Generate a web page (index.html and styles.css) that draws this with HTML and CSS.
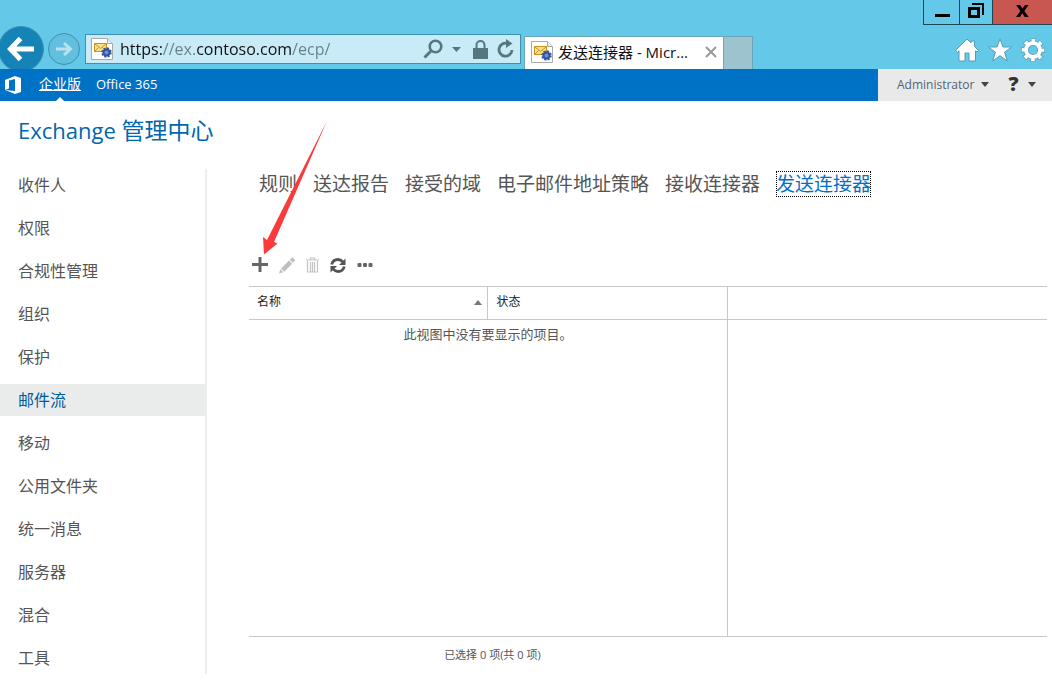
FILE: index.html
```html
<!DOCTYPE html>
<html lang="zh-CN">
<head>
<meta charset="utf-8">
<title>发送连接器 - Microsoft Exchange</title>
<link rel="stylesheet" href="styles.css">
</head>
<body>
<svg class="symbols" aria-hidden="true">
  <symbol id="page-icon" viewBox="0 0 22 22">
    <path d="M.5.5h16l5 5v16H.5z" fill="#fff" stroke="#a9a9a9"/>
    <path d="M16.500.5v5h5" fill="#eee" stroke="#a9a9a9"/>
    <path d="M3.500 5.500h12v8h-12z" fill="#fbe08a" stroke="#c9921d"/>
    <path d="M3.500 5.500l6 5 6-5M3.500 13.500l4-4M15.500 13.500l-4-4" fill="none" stroke="#c9921d"/>
    <circle cx="15.500" cy="14.500" r="3" fill="#6f8fd8" stroke="#34549c" stroke-width="2"/>
    <circle cx="15.500" cy="14.500" r="4.300" fill="none" stroke="#34549c" stroke-width="1.800" stroke-dasharray="2 1.380"/>
  </symbol>
</svg>

<header class="browser">
  <div class="window-row">
    <button class="win" aria-label="最小化"><svg width="16" height="16" viewBox="0 0 16 16"><path d="M1 11h15v3H1z"/></svg></button>
    <button class="win" aria-label="还原"><svg width="16" height="16" viewBox="0 0 16 16"><path d="M1.500 5.500h9v8h-9z" fill="none" stroke="#000" stroke-width="3"/><path d="M4 1h11v11" fill="none" stroke="#000" stroke-width="2"/></svg></button>
    <button class="win win-close" aria-label="关闭"><svg width="16" height="16" viewBox="0 0 16 16"><path d="M1 2h4l2.500 3.500L10 2h3.500L9.300 8l4.400 6h-4l-2.400-3.700L5 14H1l4.400-6z"/></svg></button>
  </div>
  <div class="nav-row">
    <button class="back" aria-label="后退"><svg width="28" height="26" viewBox="0 0 28 26"><path d="M3 13h24M13.500 2.500L3.500 13l10 10.500" fill="none" stroke="#fff" stroke-width="5"/></svg></button>
    <button class="forward" aria-label="前进"><svg width="18" height="16" viewBox="0 0 18 16"><path d="M1 8h14M9 2l6.500 6L9 14" fill="none" stroke="#b9e2ef" stroke-width="3"/></svg></button>
    <div class="address">
      <svg width="22" height="22"><use href="#page-icon"/></svg>
      <input class="url" type="text" aria-label="地址" value="https://ex.contoso.com/ecp/">
      <button class="plain" aria-label="搜索"><svg width="20" height="20" viewBox="0 0 20 20"><circle cx="12.500" cy="7.500" r="5.800" fill="none" stroke="#56777f" stroke-width="2.600"/><path d="M8.500 11.500L1.500 18.500" stroke="#56777f" stroke-width="3"/></svg></button>
      <button class="plain drop" aria-label="搜索选项"><svg width="9" height="5" viewBox="0 0 9 5"><path d="M0 0h9L4.500 5z" fill="#56777f"/></svg></button>
      <button class="plain lock" aria-label="安全"><svg width="15" height="19" viewBox="0 0 15 19"><path d="M0 8h15v11H0z" fill="#56777f"/><path d="M3.500 9V5a4 4 0 018 0v4" fill="none" stroke="#56777f" stroke-width="2"/></svg></button>
      <button class="plain" aria-label="刷新"><svg width="18" height="20" viewBox="0 0 18 20"><path d="M10.500 4.500A6.500 6.500 0 1015 11" fill="none" stroke="#56777f" stroke-width="2.800"/><path d="M9 0l6.500 4.500L9 9z" fill="#56777f"/></svg></button>
    </div>
    <div class="page-tab">
      <svg width="22" height="22"><use href="#page-icon"/></svg>
      <span class="page-title">发送连接器 - Micr...</span>
      <button class="plain" aria-label="关闭标签页"><svg width="12" height="12" viewBox="0 0 12 12"><path d="M1 1l10 10M11 1L1 11" stroke="#999" stroke-width="2"/></svg></button>
    </div>
    <button class="new-tab" aria-label="新建标签页"></button>
    <div class="tools">
      <button class="plain" aria-label="主页"><svg width="24" height="24" viewBox="0 0 24 24"><path d="M12 1L.5 12.500 2.500 14 4 12.800V23h6v-8h4v8h6.500V12.800L22 14l1.500-1.500-4-4V3H16v2z" fill="#fff" stroke="#5b9bb0"/></svg></button>
      <button class="plain" aria-label="收藏夹"><svg width="24" height="24" viewBox="0 0 24 24"><path d="M12 .8l2.900 8.200h8.600l-6.900 5.200 2.600 8.800-7.200-5.300L4.800 23l2.600-8.800L.5 9h8.600z" fill="#fff" stroke="#5b9bb0"/></svg></button>
      <button class="plain" aria-label="工具"><svg width="24" height="24" viewBox="0 0 24 24"><circle cx="12" cy="12" r="9.600" fill="none" stroke="#5b9bb0" stroke-width="4.800" stroke-dasharray="4.800 2.740" stroke-dashoffset="2.400"/><circle cx="12" cy="12" r="7" fill="none" stroke="#5b9bb0" stroke-width="5.400"/><circle cx="12" cy="12" r="9.600" fill="none" stroke="#fff" stroke-width="3.400" stroke-dasharray="3.600 3.940" stroke-dashoffset="1.800"/><circle cx="12" cy="12" r="7" fill="none" stroke="#fff" stroke-width="3.800"/></svg></button>
    </div>
  </div>
</header>

<div class="suite">
  <nav class="suite-links">
    <svg class="office" width="16" height="18" viewBox="0 0 16 18"><path fill-rule="evenodd" d="M0 4l10-4 6 2v14l-6 2-10-4 10 1V3L4 4.500v8L0 14z" fill="#fff"/></svg>
    <a class="suite-link current" href="#">企业版</a>
    <a class="suite-link" href="#">Office 365</a>
  </nav>
  <div class="account">
    <button class="plain user">Administrator <svg width="8" height="5" viewBox="0 0 8 5"><path d="M0 0h8L4 5z" fill="#444"/></svg></button>
    <button class="plain help" aria-label="帮助"><span>?</span><svg width="8" height="5" viewBox="0 0 8 5"><path d="M0 0h8L4 5z" fill="#444"/></svg></button>
  </div>
</div>

<h1 class="title">Exchange <span class="title-cjk">管理中心</span></h1>

<div class="main">
  <nav class="side">
    <a href="#">收件人</a>
    <a href="#">权限</a>
    <a href="#">合规性管理</a>
    <a href="#">组织</a>
    <a href="#">保护</a>
    <a class="selected" href="#">邮件流</a>
    <a href="#">移动</a>
    <a href="#">公用文件夹</a>
    <a href="#">统一消息</a>
    <a href="#">服务器</a>
    <a href="#">混合</a>
    <a href="#">工具</a>
  </nav>

  <main class="content">
    <nav class="tabs">
      <a href="#">规则</a>
      <a href="#">送达报告</a>
      <a href="#">接受的域</a>
      <a href="#">电子邮件地址策略</a>
      <a href="#">接收连接器</a>
      <a class="active" href="#">发送连接器</a>
    </nav>

    <div class="toolbar">
      <button class="plain" aria-label="新建"><svg width="16" height="16" viewBox="0 0 16 16"><path d="M8 0v15M0 7.500h16" stroke="#666" stroke-width="3"/></svg>
        <svg class="pointer" width="64" height="134" viewBox="0 0 64 134"><path d="M64 0L11 121l3.500 1.500L1 133.500 0 116l4 3z" fill="#fb3b3b"/></svg>
      </button>
      <button class="plain" aria-label="编辑" disabled><svg width="16" height="17" viewBox="0 0 16 17"><path d="M2 11.500L10 3.500l3.200 3.200-8 8zM10.800 2.700L13.300.3l3 3-2.400 2.500zM0 16.500l1.300-4.200 3 3z" fill="#bfbfbf"/></svg></button>
      <button class="plain" aria-label="删除" disabled><svg width="13" height="16" viewBox="0 0 13 16"><path d="M0 3h13M4.500 2.500V1h4v1.500M1.500 4v11h10V4M4.500 5v10M6.500 5v10M8.500 5v10" fill="none" stroke="#c4c4c4" stroke-width="1.200"/></svg></button>
      <button class="plain" aria-label="刷新列表"><svg width="16" height="15" viewBox="0 0 16 15"><path d="M1.700 6.500C2.500 3 5 1.500 8 1.500c2 0 3.500.8 4.800 2.300M14.300 8.500c-.8 3.500-3.300 5-6.300 5-2 0-3.500-.8-4.800-2.300" fill="none" stroke="#555" stroke-width="2.800"/><path d="M15.500.5v6.500h-6.500zM.5 14.500V8H7z" fill="#555"/></svg></button>
      <button class="plain" aria-label="更多"><svg width="16" height="4" viewBox="0 0 16 4"><rect x=".5" width="4" height="4" rx="1" fill="#666"/><rect x="6" width="4" height="4" rx="1" fill="#666"/><rect x="11.500" width="4" height="4" rx="1" fill="#666"/></svg></button>
    </div>

    <table class="grid">
      <thead>
        <tr>
          <th class="col"><span class="head">名称 <svg width="8" height="5" viewBox="0 0 8 5"><path d="M0 5h8L4 0z" fill="#777"/></svg></span></th>
          <th class="col">状态</th>
          <th aria-label="详细信息"></th>
        </tr>
      </thead>
      <tbody>
        <tr>
          <td class="empty" colspan="2">此视图中没有要显示的项目。</td>
          <td></td>
        </tr>
      </tbody>
    </table>
    <p class="count">已选择 0 项(共 0 项)</p>
  </main>
</div>
</body>
</html>
```
FILE: styles.css
```css
* { box-sizing: border-box; }

body {
  margin: 0;
  min-height: 100vh;
  display: flex;
  flex-direction: column;
  background: #fff;
  color: #555;
  font-family: "Open Sans", "Noto Sans CJK SC", sans-serif;
  font-size: 16px;
}

a { color: inherit; text-decoration: none; }
svg { display: block; flex: none; }
button { font: inherit; color: inherit; }
.symbols { position: absolute; width: 0; height: 0; }

.plain {
  display: flex;
  align-items: center;
  padding: 0;
  border: 0;
  background: none;
}

/* Browser frame */
.browser { background: #64c9e9; }

.window-row {
  display: flex;
  justify-content: flex-end;
  height: 25px;
}

.win {
  display: flex;
  align-items: center;
  justify-content: center;
  width: 36px;
  padding: 0 0 2px;
  border: solid #1f4552;
  border-width: 0 0 1px 1px;
  background: none;
}

.win + .win { width: 33px; }
.win + .win-close { width: 60px; background: #c75750; }

.nav-row {
  display: flex;
  align-items: flex-start;
  height: 44px;
  overflow: hidden;
}

.back {
  display: flex;
  align-items: center;
  justify-content: center;
  flex: none;
  width: 46px;
  height: 46px;
  margin: 1px 4px 0 -2px;
  padding: 0;
  border: 1px solid #3a92b4;
  border-radius: 50%;
  background: #1583b5;
}

.forward {
  display: flex;
  align-items: center;
  justify-content: center;
  flex: none;
  width: 32px;
  height: 32px;
  margin: 8px 5px 0 0;
  padding: 0;
  border: 1px solid #3f8fae;
  border-radius: 50%;
  background: #62c0de;
}

.address {
  display: flex;
  align-items: center;
  flex: 1;
  max-width: 436px;
  height: 30px;
  margin-top: 9px;
  padding: 0 5px;
  border: 1px solid #3f8fae;
  background: #c8ebf7;
}

/* The host name stands out from the rest of the address */
.url {
  flex: 1;
  min-width: 0;
  margin-left: 7px;
  padding: 0;
  border: 0;
  outline: 0;
  font: inherit;
  color: transparent;
  background: linear-gradient(90deg, #111 43px, #668087 43px 75px, #111 75px 172px, #668087 172px);
  -webkit-background-clip: text;
  background-clip: text;
}

.drop { margin: 0 12px 0 9px; }
.lock { margin-right: 9px; }

.page-tab {
  display: flex;
  align-items: center;
  width: 200px;
  height: 33px;
  margin: 11px 0 0 3px;
  padding: 0 6px 2px;
  border: 1px solid #6aa5ba;
  border-bottom: 0;
  background: #fff;
  color: #111;
}

.page-title {
  flex: 1;
  margin-left: 5px;
  font-size: 15px;
  line-height: 20px;
  white-space: nowrap;
}

.new-tab {
  width: 29px;
  height: 33px;
  margin-top: 11px;
  border: 1px solid #6aa5ba;
  border-width: 1px 1px 0 0;
  background: #9dc3cf;
}

.tools {
  display: flex;
  gap: 9px;
  margin: 13px 7px 0 auto;
}

/* Suite bar */
.suite {
  display: flex;
  height: 32px;
  background: #0072c6;
  font-size: 13px;
}

.suite-links {
  display: flex;
  align-items: center;
  flex: 1;
  padding-left: 5px;
  color: #fff;
}

.office { margin-right: 18px; }

.suite-link {
  height: 32px;
  margin-right: 15px;
  line-height: 30px;
}

.current {
  position: relative;
  font-size: 14px;
  text-decoration: underline;
}

.current::after {
  content: "";
  position: absolute;
  left: 50%;
  bottom: 0;
  margin-left: -4px;
  border: 4px solid transparent;
  border-top: 0;
  border-bottom-color: #fff;
}

.account {
  display: flex;
  align-items: center;
  gap: 19px;
  width: 174px;
  padding: 0 0 2px 19px;
  background: #e9e9e9;
  color: #4f6478;
}

.user { gap: 7px; font-size: 12px; }
.help { gap: 9px; font-size: 20px; font-weight: 800; line-height: 24px; color: #333; }

.title {
  margin: 13px 18px 23px;
  font-size: 22px;
  font-weight: 400;
  line-height: 32px;
  color: #0067b0;
}

.title-cjk { font-size: 23px; }

/* Page body */
.main {
  display: flex;
  flex: 1;
  padding-bottom: 15px;
}

.side {
  display: flex;
  flex-direction: column;
  gap: 11px;
  flex: none;
  width: 207px;
  border-right: 2px solid #eee;
}

.side a {
  padding-left: 18px;
  line-height: 32px;
}

.side .selected {
  margin-right: -2px;
  background: #eaebeb;
  color: #005a9e;
}

.content {
  display: flex;
  flex-direction: column;
  flex: 1;
  min-width: 0;
  padding: 0 5px 0 42px;
}

.tabs {
  display: flex;
  gap: 16px;
  padding: 2px 10px 0;
  font-size: 19px;
  line-height: 26px;
  white-space: nowrap;
}

.tabs .active {
  outline: 1px dotted #000;
  outline-offset: -1px;
  color: #0072c6;
}

.toolbar {
  display: flex;
  align-items: center;
  gap: 11px;
  height: 20px;
  margin: 58px 0 11px 3px;
}

.toolbar .plain { position: relative; }

.pointer {
  position: absolute;
  left: 11px;
  bottom: 18px;
  pointer-events: none;
}

.grid {
  flex: 1;
  display: flex;
  flex-direction: column;
  border: solid #c8c8c8;
  border-width: 1px 0;
}

.grid thead, .grid tbody { display: flex; flex-direction: column; }
.grid tbody { flex: 1; }
.grid tr { display: flex; flex: 1; }
.grid thead { height: 33px; border-bottom: 1px solid #c8c8c8; }

.grid th {
  padding: 0 5px 0 8px;
  font-size: 12px;
  font-weight: 400;
  line-height: 30px;
  text-align: left;
  color: #222;
}

.grid .col { flex: 0 0 30%; border-right: 1px solid #c8c8c8; }
.head { display: flex; align-items: center; justify-content: space-between; }

.grid .empty {
  flex: 0 0 60%;
  padding: 4px 0 0;
  border-right: 1px solid #c8c8c8;
  font-size: 13px;
  line-height: 20px;
  text-align: center;
}

.count {
  width: 61%;
  margin: 8px 0 9px;
  font-size: 11px;
  line-height: 20px;
  text-align: center;
}
```
